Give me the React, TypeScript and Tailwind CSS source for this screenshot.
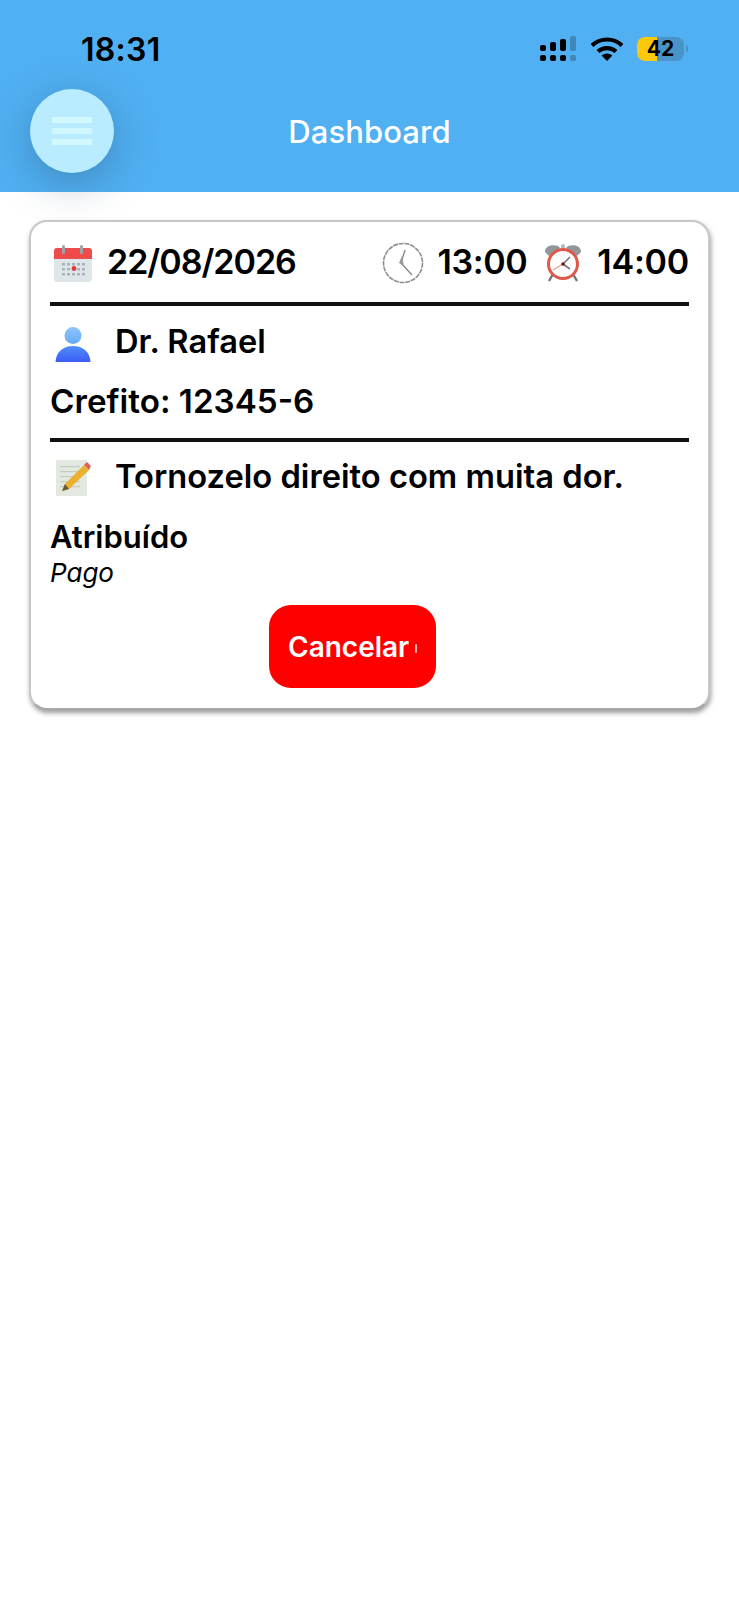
import React from "react";

const CalendarIcon = () => (
  <svg width="40" height="38" viewBox="0 0 40 38" className="shrink-0 mt-[6px] blur-[0.6px]">
    <rect x="1" y="3" width="38" height="34" rx="3" fill="#dfe6ea" />
    <path d="M1 14V6a3 3 0 0 1 3-3h32a3 3 0 0 1 3 3v8z" fill="#ef4b4b" />
    <rect x="9" y="0" width="3" height="9" rx="1.5" fill="#9aa3a8" />
    <rect x="27" y="0" width="3" height="9" rx="1.5" fill="#9aa3a8" />
    {[18, 23, 28].map((y) =>
      [9, 14, 19, 24, 29].map((x) => <rect key={`${x}-${y}`} x={x} y={y} width="3" height="2.5" fill="#a9b4ba" />)
    )}
    <circle cx="21" cy="23.5" r="2.4" fill="#e53935" />
  </svg>
);

const ClockIcon = () => (
  <svg width="42" height="42" viewBox="0 0 42 42" className="shrink-0 mt-[4px] blur-[0.5px]">
    <circle cx="21" cy="21" r="19.5" fill="#ffffff" stroke="#8f8f8f" strokeWidth="1.6" strokeDasharray="5 0.8" />
    <path d="M23 8 L19 21 L30 33" fill="none" stroke="#8a8a8a" strokeWidth="1.4" />
    <path d="M20 14 L17 21 L22 24z" fill="#9a9a9a" />
  </svg>
);

const AlarmIcon = () => (
  <svg width="40" height="38" viewBox="0 0 40 38" className="shrink-0 mt-[4px] blur-[0.5px]">
    <path d="M2 8C2 2 8 0 15 2L17 4L6 12z" fill="#8f979b" />
    <path d="M38 8C38 2 32 0 25 2L23 4L34 12z" fill="#8f979b" />
    <rect x="18" y="0" width="4" height="5" rx="2" fill="#b5babc" />
    <path d="M10 30 L6 37 M30 30 L34 37" stroke="#6f7679" strokeWidth="2.4" />
    <circle cx="20" cy="20" r="14.5" fill="#fff" stroke="#e0584a" strokeWidth="3" />
    <path d="M20 20 L27 13 M20 20 L27 25" stroke="#777" strokeWidth="1.6" />
    <path d="M20 20 L10 26" stroke="#e89a94" strokeWidth="1.2" />
    <circle cx="20" cy="20" r="1.8" fill="#5b1f1f" />
  </svg>
);

const UserIcon = () => (
  <svg width="36" height="35" viewBox="0 0 36 35" className="shrink-0 mt-[6px]">
    <defs>
      <linearGradient id="head" x1="0" y1="0" x2="0" y2="1">
        <stop offset="0" stopColor="#8cc6fb" />
        <stop offset="1" stopColor="#66aaf9" />
      </linearGradient>
      <linearGradient id="body" x1="0" y1="0" x2="0" y2="1">
        <stop offset="0" stopColor="#4f8ff8" />
        <stop offset="1" stopColor="#3d5cf6" />
      </linearGradient>
    </defs>
    <circle cx="18" cy="8.5" r="8.5" fill="url(#head)" />
    <path d="M0.5 35C1 25 8 19 18 19s17 6 17.5 16z" fill="url(#body)" />
  </svg>
);

const NoteIcon = () => (
  <svg width="36" height="38" viewBox="0 0 36 38" className="shrink-0 blur-[0.7px]">
    <rect x="1" y="2" width="31" height="36" fill="#e3e8e0" />
    {[8, 13, 18, 23, 28].map((y) => (
      <rect key={y} x="5" y={y} width="20" height="1.2" fill="#c6ccc2" />
    ))}
    <path d="M7 33 L10 26 L29 7 L34 12 L14 31z" fill="#eab02e" />
    <path d="M29 7 L32 4 L36 8 L34 12z" fill="#e0605a" />
    <path d="M7 33 L10 26 L14 31z" fill="#6a5a3a" />
  </svg>
);

const Signal = () => (
  <div className="flex items-end gap-[4px]">
    {[6, 9, 12, 15].map((h, i) => (
      <div key={h} className="flex flex-col gap-[4px]">
        {i === 3 ? (
          <>
            <div className="w-[6px] h-[15px] rounded-[2px] bg-[#3f86bb]" />
            <div className="w-[6px] h-[6px] rounded-[2px] bg-[#3f86bb]" />
          </>
        ) : (
          <>
            <div className="w-[6px] rounded-[2px] bg-black" style={{ height: h }} />
            <div className="w-[6px] h-[6px] rounded-[2px] bg-black" />
          </>
        )}
      </div>
    ))}
  </div>
);

const Wifi = () => (
  <svg width="32" height="24" viewBox="0 0 32 24" className="shrink-0">
    <path d="M1 8.5C9.5 0.5 22.5 0.5 31 8.5" fill="none" stroke="#000" strokeWidth="4.2" />
    <path d="M7 14.5C12 10 20 10 25 14.5" fill="none" stroke="#000" strokeWidth="4.2" />
    <path d="M10.6 18.6C13.6 15.8 18.4 15.8 21.4 18.6L16 24z" fill="#000" />
  </svg>
);

const Battery = () => (
  <div className="flex items-center gap-[2px]">
    <div className="relative w-[47px] h-[24px] rounded-[8px] overflow-hidden bg-[#4a93c7] flex items-center justify-center">
      <div className="absolute left-0 top-0 bottom-0 w-[20px] bg-[#fcc80b]" />
      <span className="relative text-[21px] leading-none font-bold text-black">42</span>
    </div>
    <div className="w-[2px] h-[7px] rounded-r-[2px] bg-[#4a93c7]" />
  </div>
);

export default function App() {
  return (
    <div className="min-h-[1600px] bg-white text-black font-['Inter','Liberation_Sans',sans-serif]">
      <header className="h-[192px] bg-[#50b0f2] flex flex-col">
        <div className="h-[89px] pt-[37px] flex items-start justify-between pl-[81px] pr-[51px]">
          <span className="text-[32px] leading-[26px] font-semibold tracking-[0.3px]">18:31</span>
          <div className="flex items-center -mt-[1px]">
            <Signal />
            <div className="ml-[15px] mr-[14px]"><Wifi /></div>
            <Battery />
          </div>
        </div>
        <div className="grid grid-cols-[1fr_auto_1fr] items-center px-[30px]">
          <div className="w-[84px] h-[84px] rounded-full bg-[#b9ecff] shadow-[0_10px_40px_rgba(40,70,100,0.36)] flex flex-col items-center justify-center gap-[5px]">
            <div className="w-[40px] h-[6px] bg-[#d2f8ff]" />
            <div className="w-[40px] h-[6px] bg-[#d2f8ff]" />
            <div className="w-[40px] h-[6px] bg-[#d2f8ff]" />
          </div>
          <span className="text-[31px] font-medium text-white leading-none tracking-[0.1px]">Dashboard</span>
          <div />
        </div>
      </header>

      <main className="pt-[28px] px-[29px]">
        <div className="w-[681px] h-[490px] rounded-[18px] bg-white border-[2px] border-[#c8c8c8] border-b-[#a8a8a8] shadow-[1px_3px_5px_rgba(0,0,0,0.4)] px-[19px]">
          <div className="h-[80px] pb-[2px] flex items-center justify-between text-[34px] font-semibold">
            <div className="flex items-center gap-[14px] pl-[3px]">
              <CalendarIcon />
              <span className="tracking-[-1px]">22/08/2026</span>
            </div>
            <div className="flex items-center">
              <ClockIcon />
              <span className="ml-[14px] tracking-[-0.4px]">13:00</span>
              <span className="ml-[16px]"><AlarmIcon /></span>
              <span className="ml-[14px] tracking-[-0.2px]">14:00</span>
            </div>
          </div>
          <div className="h-[4px] bg-[#111]" />
          <div className="h-[70px] flex items-center pl-[5px] gap-[24px] text-[32.6px] font-semibold">
            <UserIcon />
            <span>Dr. Rafael</span>
          </div>
          <div className="h-[48px] mt-[2px] flex items-center text-[33.2px] font-semibold">Crefito: 12345-6</div>
          <div className="h-[4px] mt-[12px] bg-[#111]" />
          <div className="h-[70px] flex items-center pl-[5px] gap-[24px] text-[32.7px] font-semibold">
            <NoteIcon />
            <span>Tornozelo direito com muita dor.</span>
          </div>
          <div className="text-[31px] font-semibold leading-[36px] mt-[7px]">Atribuído</div>
          <div className="text-[26px] italic leading-[35px]">Pago</div>
          <div className="flex mt-[15px] pl-[219px]">
            <button className="relative w-[167px] h-[83px] rounded-[22px] bg-[#ff0000] text-white text-[28px] font-semibold text-left pl-[19px]">
              Cancelar
              <span className="absolute left-[146px] top-[39px] w-[2px] h-[9px] rounded-full bg-white/70" />
            </button>
          </div>
        </div>
      </main>
    </div>
  );
}
